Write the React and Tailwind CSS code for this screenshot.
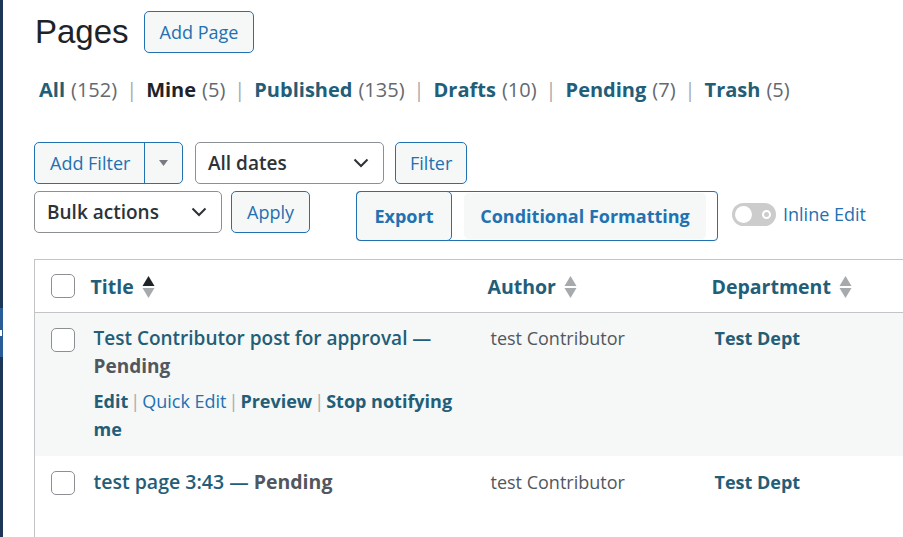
import React from 'react';

const LINK = 'text-[#225e78]';

const SortIcon = ({ active }) => (
  <svg width="13" height="24" viewBox="0 0 13 24" className="ml-[8px] shrink-0">
    <path d="M6.5 1 L12.5 11 L0.5 11 Z" fill={active ? '#1d2327' : '#a7aaad'} />
    <path d="M0.5 13 L12.5 13 L6.5 23 Z" fill="#a7aaad" />
  </svg>
);

const Chevron = () => (
  <svg width="16" height="10" viewBox="0 0 16 10" className="shrink-0">
    <polyline points="1.5,1.5 8,8 14.5,1.5" fill="none" stroke="#2c3338" strokeWidth="2" />
  </svg>
);

const Checkbox = () => (
  <div className="w-[24px] h-[24px] rounded-[5px] border border-[#8c8f94] bg-white" />
);

const Select = ({ label, width }) => (
  <div
    className={`${width} h-[42px] flex items-center justify-between pl-[12px] pr-[14px] border border-[#8c8f94] rounded-[5px] bg-white text-[19px] font-semibold text-[#2c3338]`}
  >
    <span>{label}</span>
    <Chevron />
  </div>
);

const Button = ({ children, className = '' }) => (
  <button
    className={`h-[42px] px-[14px] border border-[#2271b1] rounded-[5px] bg-[#f6f7f7] text-[18px] text-[#2271b1] ${className}`}
  >
    {children}
  </button>
);

const statuses = [
  { label: 'All', count: 152 },
  { label: 'Mine', count: 5, current: true },
  { label: 'Published', count: 135 },
  { label: 'Drafts', count: 10 },
  { label: 'Pending', count: 7 },
  { label: 'Trash', count: 5 },
];

const Sep = () => <span className="text-[#a7aaad] mx-[2px]">|</span>;

export default function App() {
  return (
    <div className="w-[903px] h-[537px] overflow-hidden bg-white flex font-['Open_Sans',sans-serif]">
      {/* admin sidebar edge */}
      <div className="w-[3px] shrink-0 flex flex-col">
        <div className="h-[308px] bg-[#1d3557]" />
        <div className="h-[49px] bg-[#2a5d97] flex flex-col justify-center">
          <div className="w-[2px] h-[6px] bg-white" />
        </div>
        <div className="flex-1 bg-[#1d3557]" />
      </div>

      <div className="flex-1 pl-[31px] min-w-0">
        {/* heading */}
        <div className="flex items-center pt-[11px]">
          <h1 className="ml-[1px] text-[33px] leading-[42px] text-[#1d2327] font-['Liberation_Sans',sans-serif]">
            Pages
          </h1>
          <Button className="ml-[15px] px-[15px]">Add Page</Button>
        </div>

        {/* status links */}
        <div className="mt-[22px] ml-[5px] h-[30px] flex items-center text-[20px] leading-[30px] whitespace-nowrap">
          {statuses.map((s, i) => (
            <React.Fragment key={s.label}>
              {i > 0 && <span className="text-[#a7aaad] mx-[9px]">|</span>}
              <span className={`font-bold ${s.current ? 'text-[#1d2327]' : LINK}`}>{s.label}</span>
              <span className="text-[#646970] ml-[6px]">({s.count})</span>
            </React.Fragment>
          ))}
        </div>

        {/* filters */}
        <div className="mt-[37px] flex items-center gap-[12px]">
          <div className="flex h-[42px] border border-[#2271b1] rounded-[5px] bg-[#f6f7f7] text-[18px] text-[#2271b1]">
            <span className="w-[110px] pl-[15px] flex items-center border-r border-[#2271b1]">Add Filter</span>
            <span className="w-[37px] flex items-center justify-center">
              <svg width="9" height="6" viewBox="0 0 9 6">
                <path d="M0 0 L9 0 L4.5 6 Z" fill="#787c82" />
              </svg>
            </span>
          </div>
          <Select label="All dates" width="w-[189px]" />
          <Button className="-ml-[1px]">Filter</Button>
        </div>

        <div className="mt-[7px] flex items-start">
          <Select label="Bulk actions" width="w-[188px]" />
          <Button className="ml-[9px] w-[79px]">Apply</Button>
          <div className="ml-[46px] h-[50px] w-[362px] flex items-center border border-[#2271b1] rounded-[4px] text-[18px] font-bold text-[#2271b1]">
            <div className="-ml-px -my-px h-[50px] w-[96px] flex items-center justify-center border border-[#2271b1] rounded-[5px] bg-[#f6f7f7]">
              Export
            </div>
            <div className="ml-[12px] h-[46px] w-[242px] flex items-center justify-center rounded-[5px] bg-[#f6f7f7]">
              Conditional Formatting
            </div>
          </div>
          <div className="ml-[14px] h-[46px] flex items-center">
            <div className="w-[44px] h-[23px] rounded-full bg-[#cccccc] flex items-center justify-between pl-[3px] pr-[5px]">
              <div className="w-[17px] h-[17px] rounded-full bg-white" />
              <div className="w-[9px] h-[9px] rounded-full border-[2px] border-white" />
            </div>
            <span className="ml-[7px] text-[18px] text-[#2271b1]">Inline Edit</span>
          </div>
        </div>

        {/* table */}
        <table className="mt-[18px] w-[880px] table-fixed border-collapse border border-[#c3c4c7] text-[18px] leading-[28px]">
          <colgroup>
            <col className="w-[48px]" />
            <col className="w-[397px]" />
            <col className="w-[224px]" />
            <col />
          </colgroup>
          <thead>
            <tr className="h-[53px] border-b border-[#c3c4c7] bg-white">
              <th className="pl-[16px] align-middle">
                <Checkbox />
              </th>
              {[
                { label: 'Title', active: true },
                { label: 'Author' },
                { label: 'Department' },
              ].map((h) => (
                <th key={h.label} className="pl-[8px] pt-[2px] text-left align-middle">
                  <span className={`inline-flex items-center text-[19.5px] font-bold ${LINK}`}>
                    {h.label}
                    <SortIcon active={h.active} />
                  </span>
                </th>
              ))}
            </tr>
          </thead>
          <tbody>
            <tr className="bg-[#f6f7f7] align-top">
              <td className="pl-[16px] pt-[15px]">
                <Checkbox />
              </td>
              <td className="pl-[11px] pr-[8px] pt-[11px] pb-[13px]">
                <div className={`text-[19px] font-semibold ${LINK}`}>
                  Test Contributor post for approval —{' '}
                  <span className="font-bold text-[#50575e]">Pending</span>
                </div>
                <div className="mt-[7px]">
                  <span className={`font-bold ${LINK}`}>Edit</span>
                  <Sep />
                  <span className="text-[#2271b1]">Quick Edit</span>
                  <Sep />
                  <span className={`font-bold ${LINK}`}>Preview</span>
                  <Sep />
                  <span className={`font-bold ${LINK}`}>Stop notifying me</span>
                </div>
              </td>
              <td className="pl-[11px] pt-[11px] text-[#50575e]">test Contributor</td>
              <td className="pl-[11px] pt-[11px]">
                <span className={`font-bold ${LINK}`}>Test Dept</span>
              </td>
            </tr>
            <tr className="h-[90px] bg-white align-top">
              <td className="pl-[16px] pt-[15px]">
                <Checkbox />
              </td>
              <td className="pl-[11px] pt-[12px] text-[19.5px]">
                <span className={`font-semibold ${LINK}`}>test page 3:43 — </span>
                <span className="font-bold text-[#50575e]">Pending</span>
              </td>
              <td className="pl-[11px] pt-[12px] text-[#50575e]">test Contributor</td>
              <td className="pl-[11px] pt-[12px]">
                <span className={`font-bold ${LINK}`}>Test Dept</span>
              </td>
            </tr>
          </tbody>
        </table>
      </div>
    </div>
  );
}
